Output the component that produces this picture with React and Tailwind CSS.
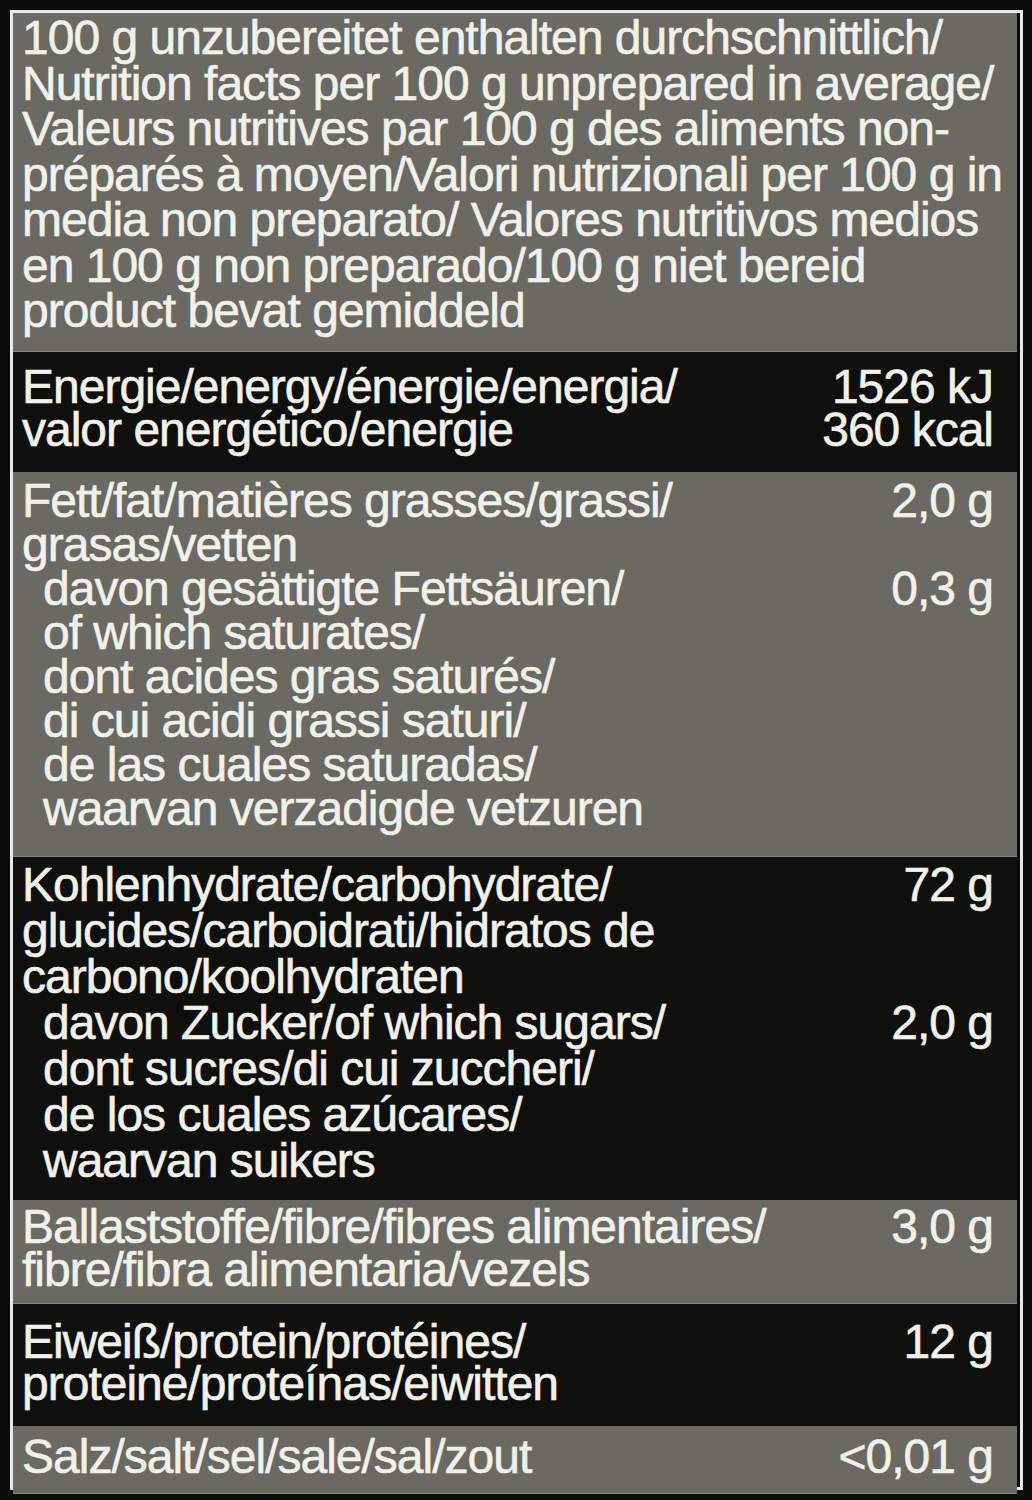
import React from 'react';

// Nutrition label: alternating grey / black bands inside a thin light frame
const sections = [
  {
    tone: 'gray',
    pad: 'pt-[2px] pb-[17px]',
    lh: 'leading-[45.5px]',
    lines: [
      { t: '100 g unzubereitet enthalten durchschnittlich/' },
      { t: 'Nutrition facts per 100 g unprepared in average/' },
      { t: 'Valeurs nutritives par 100 g des aliments non-' },
      { t: 'préparés à moyen/Valori nutrizionali per 100 g in' },
      { t: 'media non preparato/ Valores nutritivos medios' },
      { t: 'en 100 g non preparado/100 g niet bereid' },
      { t: 'product bevat gemiddeld' },
    ],
  },
  {
    tone: 'black',
    pad: 'pt-[13px] pb-[21px]',
    lh: 'leading-[43px]',
    lines: [
      { t: 'Energie/energy/énergie/energia/', v: '1526 kJ' },
      { t: 'valor energético/energie', v: '360 kcal' },
    ],
  },
  {
    tone: 'gray',
    pad: 'pt-[7px] pb-[25px]',
    lh: 'leading-[44px]',
    lines: [
      { t: 'Fett/fat/matières grasses/grassi/', v: '2,0 g' },
      { t: 'grasas/vetten' },
      { t: 'davon gesättigte Fettsäuren/', v: '0,3 g', sub: true },
      { t: 'of which saturates/', sub: true },
      { t: 'dont acides gras saturés/', sub: true },
      { t: 'di cui acidi grassi saturi/', sub: true },
      { t: 'de las cuales saturadas/', sub: true },
      { t: 'waarvan verzadigde vetzuren', sub: true },
    ],
  },
  {
    tone: 'black',
    pad: 'pt-[5px] pb-[16px]',
    lh: 'leading-[46px]',
    lines: [
      { t: 'Kohlenhydrate/carbohydrate/', v: '72 g' },
      { t: 'glucides/carboidrati/hidratos de' },
      { t: 'carbono/koolhydraten' },
      { t: 'davon Zucker/of which sugars/', v: '2,0 g', sub: true },
      { t: 'dont sucres/di cui zuccheri/', sub: true },
      { t: 'de los cuales azúcares/', sub: true },
      { t: 'waarvan suikers', sub: true },
    ],
  },
  {
    tone: 'gray',
    pad: 'pt-[5px] pb-[12px]',
    lh: 'leading-[43px]',
    lines: [
      { t: 'Ballaststoffe/fibre/fibres alimentaires/', v: '3,0 g' },
      { t: 'fibre/fibra alimentaria/vezels' },
    ],
  },
  {
    tone: 'black',
    pad: 'pt-[17px] pb-[21px]',
    lh: 'leading-[42px]',
    lines: [
      { t: 'Eiweiß/protein/protéines/', v: '12 g' },
      { t: 'proteine/proteínas/eiwitten' },
    ],
  },
  {
    tone: 'gray',
    pad: 'pt-[8px] pb-[14px]',
    lh: 'leading-[45px]',
    lines: [{ t: 'Salz/salt/sel/sale/sal/zout', v: '<0,01 g' }],
  },
];

function Band({ section }) {
  const bg =
    section.tone === 'gray'
      ? 'bg-[#6a6963] border-b border-[#7f8788]'
      : 'bg-[#0f0f0d]';
  return (
    <div className={`${bg} ${section.pad} pl-[9px] pr-[24px] mr-[3px]`}>
      {section.lines.map((line, i) => (
        <div key={i} className={`flex justify-between items-baseline whitespace-nowrap ${section.lh}`}>
          <span className={line.sub ? 'pl-[21px]' : ''}>{line.t}</span>
          {line.v && <span>{line.v}</span>}
        </div>
      ))}
    </div>
  );
}

export default function App() {
  return (
    <div
      className="w-[1032px] h-[1500px] bg-[#0b0b0a] pt-[10px] pb-[10px] pl-[10px] pr-[9px] text-[#f1f1eb] text-[48px] tracking-[-1px] [-webkit-text-stroke:0.6px_#f1f1eb]"
      style={{ fontFamily: '"Liberation Sans", Arial, sans-serif' }}
    >
      <div className="h-full border-[3px] border-[#e4e9e7] flex flex-col">
        {sections.map((s, i) => (
          <Band key={i} section={s} />
        ))}
        <div className="flex-1 bg-[#0b0b0a]" />
      </div>
    </div>
  );
}
